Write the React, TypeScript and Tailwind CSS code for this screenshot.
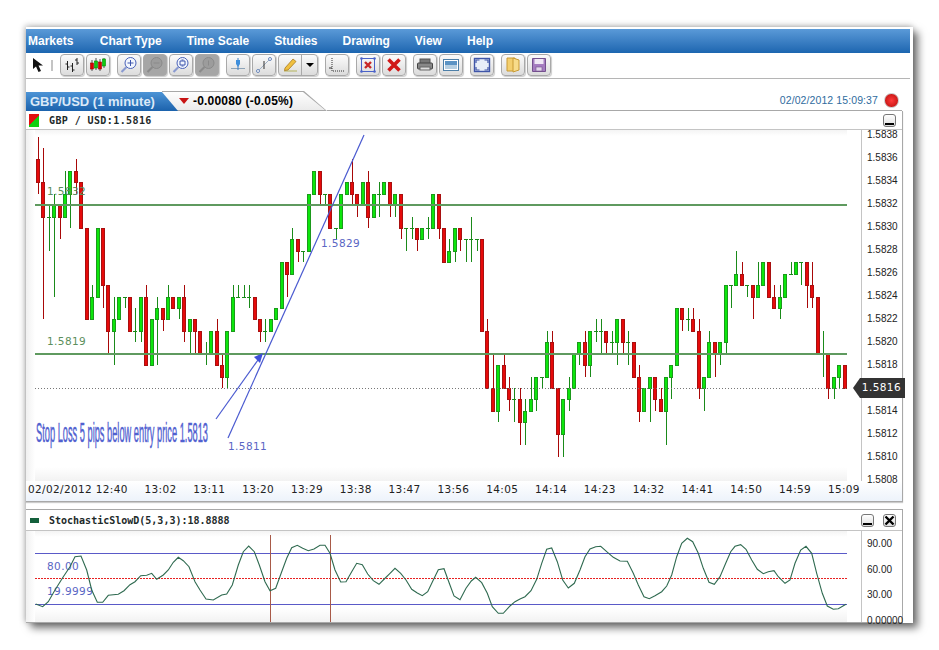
import type { ReactNode } from 'react';

type Candle = { c: 'r' | 'g' | 'd'; top: number; bot: number; hi: number; lo: number; tick?: number };

const r = (top: number, bot: number, hi = top, lo = bot): Candle => ({ c: 'r', top, bot, hi, lo });
const g = (top: number, bot: number, hi = top, lo = bot): Candle => ({ c: 'g', top, bot, hi, lo });
const d = (hi: number, lo: number, tick = hi): Candle => ({ c: 'd', top: tick, bot: tick, hi, lo, tick });

// pips above 1.5800, read off the chart
const candles: Candle[] = [
  r(36, 34, 38, 33), r(34, 31, 37, 22), d(32, 28, 31), g(32, 31, 33, 24), r(32, 31, 32, 29), g(33, 31, 35, 31),
  g(35, 33, 35, 30), r(35, 34, 36, 33), r(34, 30), r(30, 22), g(24, 22, 25, 22), g(30, 24), r(30, 25, 30, 23),
  r(25, 21, 25, 19), g(22, 21, 24, 18), g(24, 22), d(24, 23), r(24, 21), d(23, 20, 21), g(24, 21, 24, 20),
  r(24, 18, 25, 18), g(22, 18), g(23, 22, 24, 18), r(23, 22, 23, 21), g(24, 22, 25, 22), r(24, 23), g(24, 23, 24, 22),
  r(24, 21, 25, 20), g(22, 21, 22, 19), r(22, 21, 22, 19), r(21, 19), d(20, 18, 19), g(21, 19), r(21, 18, 22, 18),
  r(18, 17, 19, 16), g(21, 17, 21, 16), g(24, 21, 25, 21), d(25, 24, 24), d(25, 24, 24), d(25, 23, 24), r(24, 22),
  r(22, 21, 22, 20), d(22, 20, 21), g(22, 21), g(23, 22), g(27, 23), r(27, 26, 27, 24), g(29, 26, 30, 26),
  r(29, 28, 29, 27), d(28, 27, 28), g(33, 28), g(35, 33), r(35, 33, 35, 32), d(33, 32, 33), r(33, 30), d(30, 29, 30),
  g(33, 30), g(34, 33), r(34, 33, 36, 32), r(33, 32, 33, 31), g(34, 32), r(34, 31, 35, 30), g(33, 31), d(34, 31, 33),
  g(34, 33), r(34, 32, 34, 31), g(33, 32, 33, 31), r(33, 30, 33, 29), d(30, 28, 30), d(31, 29, 30), r(30, 29, 30, 28),
  g(30, 29), d(31, 29, 30), g(33, 30), r(33, 30, 33, 29), r(30, 27), g(28, 27, 29, 27), g(30, 28, 30, 27),
  r(30, 29, 30, 28), d(29, 27, 29), d(31, 27, 29), d(29, 28, 29), r(29, 21), r(21, 16, 22, 16), r(16, 14, 19, 14),
  g(18, 14, 18, 13), r(18, 16, 19, 16), r(16, 15, 17, 14), d(16, 13, 15), r(15, 13, 16, 11), g(14, 13, 15, 11),
  g(15, 14, 17, 14), g(17, 15, 17, 14), d(17, 16, 17), g(20, 17, 21, 17), r(20, 16, 21, 16), r(16, 12, 16, 10),
  g(15, 12, 15, 10), g(16, 15, 17, 14), g(19, 16), g(20, 19, 20, 18), r(20, 18, 21, 17), g(21, 18, 21, 17),
  d(22, 20, 21), d(22, 19, 21), r(21, 20, 21, 19), d(21, 19, 20), g(22, 20, 22, 18), r(22, 20, 22, 19), d(21, 18, 20),
  r(20, 17), r(17, 14, 18, 13), g(16, 14), g(17, 16, 17, 13), r(17, 15, 17, 14), r(15, 14, 16, 14), g(17, 14, 17, 11),
  g(18, 17, 18, 15), g(23, 18), r(23, 22, 23, 21), d(23, 21, 22), r(22, 21, 23, 21), r(21, 16, 22, 15), g(17, 16, 17, 14),
  g(20, 17, 21, 17), r(20, 19, 20, 17), g(20, 19, 20, 18), g(25, 20, 25, 19), d(25, 23, 25), g(26, 25, 28, 25),
  r(26, 25, 27, 25), d(25, 24, 25), r(25, 24, 25, 22), g(25, 24, 27, 24), g(27, 25), r(27, 24), r(24, 23, 25, 23),
  g(24, 23, 25, 22), g(26, 24), d(27, 26, 26), g(27, 26), d(27, 25, 27), r(27, 25, 27, 23), r(25, 24, 27, 23),
  r(24, 19), d(21, 17, 19), r(19, 16, 19, 15), g(17, 16, 17, 15), g(18, 17, 18, 16), r(18, 16),
];

const py = (p: number) => Math.round(388 - (p - 16) * 11.43);

// stochastic line, page coordinates
const stoch = [
  ...[[47,402],[68,410],[85,395],[105,360],[130,320],[150,290],[165,260],[183,258],[200,300],[215,360],[232,397],[248,397],[265,376],[295,373],[312,362],[330,344],[345,335],[362,317],[380,316],[395,310],[410,328],[430,315],[445,300],[460,277],[475,262],[490,272],[507,290],[525,335],[540,360],[558,387],[580,390],[605,375],[620,372],[637,345],[655,285],[670,245],[686,228],[703,245],[718,285],[735,335],[750,362],[767,355],[785,305],[800,265],[815,233],[832,226],[848,235],[865,242],[882,237],[900,226],[915,226],[930,250]].map(([x, y]) => [20 + x / 3, 470 + y / 3]),
  ...[[15,210],[32,246],[48,245],[65,215],[80,190],[97,194],[113,222],[130,242],[147,253],[163,237],[180,220],[195,205],[212,220],[228,240],[245,268],[262,279],[277,287],[293,275],[310,240],[325,209],[342,206],[358,250],[372,288],[390,299],[408,265],[424,243],[437,232],[455,248],[472,280],[487,320],[505,340],[520,340],[540,318],[555,305],[570,297],[585,290],[603,272],[620,238],[635,190],[650,148],[665,144],[682,185],[698,240],[715,264],[733,250],[750,210],[765,170],[780,147],[797,140],[812,139],[830,155],[850,172]].map(([x, y]) => [330 + x / 3, 500 + y / 3]),
  ...[[0,273],[22,274],[40,310],[55,345],[72,380],[88,386],[105,377],[125,365],[140,348],[155,315],[170,260],[185,220],[202,205],[218,215],[235,250],[250,295],[267,337],[283,343],[300,320],[317,280],[332,245],[345,229],[362,224],[378,238],[395,270],[412,298],[430,311],[445,305],[462,302],[475,320],[495,340],[510,330],[525,280],[542,240],[558,229],[575,250],[590,310],[607,370],[622,408],[640,418],[655,416],[678,403]].map(([x, y]) => [620 + x / 3, 470 + y / 3]),
];

const times = ['02/02/2012 12:40', '13:02', '13:11', '13:20', '13:29', '13:38', '13:47', '13:56', '14:05', '14:14', '14:23', '14:32', '14:41', '14:50', '14:59', '15:09'];
// the 1.5816 slot sits under the price tag
const prices = ['1.5838', '1.5836', '1.5834', '1.5832', '1.5830', '1.5828', '1.5826', '1.5824', '1.5822', '1.5820', '1.5818', '', '1.5814', '1.5812', '1.5810', '1.5808'];

function Btn({ children, off, className = 'w-[24px]' }: { children?: ReactNode; off?: boolean; className?: string }) {
  return (
    <div
      className={`flex h-[22px] items-center justify-center rounded-[4px] border border-[#a9a9a9] shadow-[1px_1px_1px_rgba(0,0,0,0.2)] ${
        off ? 'bg-[#a6a6a6]' : 'bg-linear-to-b from-[#fbfbfb] to-[#dcdcdc]'
      } ${className}`}
    >
      {children}
    </div>
  );
}

function Ico({ children }: { children: ReactNode }) {
  return (
    <svg width="18" height="18" viewBox="0 0 18 18" fill="none">
      {children}
    </svg>
  );
}

function Lens({ off, mark }: { off?: boolean; mark: ReactNode }) {
  const c = off ? '#8a8a8a' : '#4a62b8';
  return (
    <Ico>
      <circle cx="10.5" cy="7" r="5.5" fill={off ? '#9c9c9c' : '#f2f6fd'} stroke={c} />
      <path d="M6.5 11 L1.5 16" stroke={off ? '#8a8a8a' : '#8a9ad0'} strokeWidth="2.2" />
      <g stroke={off ? '#8a8a8a' : '#3e56ae'}>{mark}</g>
    </Ico>
  );
}

function Toolbar() {
  return (
    <div className="mr-[3px] flex h-[26px] items-center border-b border-[#b5b5b5] bg-white pb-[1px]">
      <svg className="ml-[6px]" width="12" height="15" viewBox="0 0 12 15">
        <path d="M1 0 L1 11 L4 8.5 L6.5 14 L9 13 L6.5 7.5 L11 7.5 Z" fill="#111" />
      </svg>
      <div className="ml-[7px] h-[11px] w-[2px] border-x border-[#c4c4c4]" />
      <div className="ml-[7px] flex gap-[7px]">
        <div className="flex gap-[2px]">
          <Btn>
            <Ico>
              <path d="M4.5 5 V14 M2.5 8 H4.5 M4.5 11 H6.5 M9.5 7 V16 M7.5 10 H9.5 M9.5 14 H11.5 M14 2 V9 M12 4 H14 M14 7 H16" stroke="#222" />
            </Ico>
          </Btn>
          <Btn>
            <Ico>
              <path d="M3 4 V15 M7 2 V14 M11 3 V15 M15 2 V12" stroke="#555" />
              <rect x="1.5" y="7" width="3" height="6" fill="#d00" stroke="#900" strokeWidth=".6" />
              <rect x="5.5" y="5" width="3" height="7" fill="#1c1" stroke="#080" strokeWidth=".6" />
              <rect x="9.5" y="6" width="3" height="7" fill="#d00" stroke="#900" strokeWidth=".6" />
              <rect x="13.5" y="3" width="3" height="7" fill="#1c1" stroke="#080" strokeWidth=".6" />
            </Ico>
          </Btn>
        </div>
        <div className="flex gap-[2px]">
          <Btn>
            <Lens mark={<path d="M7.5 7 H13.5 M10.5 4 V10" />} />
          </Btn>
          <Btn off>
            <Lens off mark={<path d="M7.5 7 H13.5" />} />
          </Btn>
          <Btn>
            <Lens mark={<path d="M8 5 V9 H13 V5 Z M9.5 4 H11.5 M9.5 10 H11.5" />} />
          </Btn>
          <Btn off>
            <Lens off mark={<path d="M10.5 4.5 V9.5" />} />
          </Btn>
        </div>
        <div className="flex gap-[2px]">
          <Btn>
            <Ico>
              <path d="M2 12.5 H16" stroke="#8ea4b8" />
              <path d="M9 2 V14" stroke="#3f7fc4" />
              <path d="M7 4 H11 V8 L9 11 L7 8 Z" fill="#3f8fdc" />
            </Ico>
          </Btn>
          <Btn>
            <Ico>
              <path d="M3 15 L15 3" stroke="#9fb0c4" />
              <path d="M9 5 V13" stroke="#333" />
              <circle cx="3" cy="15" r="1.5" fill="#fff" stroke="#6a86b8" />
              <circle cx="15" cy="3" r="1.5" fill="#fff" stroke="#6a86b8" />
            </Ico>
          </Btn>
          <div className="flex h-[22px] w-[40px] rounded-[4px] border border-[#a9a9a9] bg-linear-to-b from-[#fbfbfb] to-[#dcdcdc] shadow-[1px_1px_1px_rgba(0,0,0,0.2)]">
            <div className="flex w-[23px] items-center justify-center border-r border-[#a9a9a9]">
              <Ico>
                <path d="M3 15 H16" stroke="#b3b35a" />
                <path d="M4 12 L12 3 L15 5.5 L7 14 L3.5 14.5 Z" fill="#f0c040" stroke="#a87a20" strokeWidth=".8" />
              </Ico>
            </div>
            <div className="flex flex-1 items-center justify-center">
              <div className="h-0 w-0 border-x-[4px] border-t-[4px] border-x-transparent border-t-black" />
            </div>
          </div>
        </div>
        <Btn>
          <Ico>
            <path d="M4 2 V15 H16" stroke="#333" strokeDasharray="1 1" />
            <path d="M1 12 H4" stroke="#333" />
          </Ico>
        </Btn>
        <div className="flex gap-[2px]">
          <Btn>
            <Ico>
              <rect x="2.5" y="2.5" width="13" height="13" stroke="#4a62c8" />
              <circle cx="2.5" cy="2.5" r="1.3" fill="#4a62c8" />
              <circle cx="15.5" cy="2.5" r="1.3" fill="#4a62c8" />
              <circle cx="2.5" cy="15.5" r="1.3" fill="#4a62c8" />
              <circle cx="15.5" cy="15.5" r="1.3" fill="#4a62c8" />
              <path d="M6 6 L12 12 M12 6 L6 12" stroke="#c82828" strokeWidth="2.4" />
            </Ico>
          </Btn>
          <Btn>
            <Ico>
              <path d="M3.5 3.5 L14.5 14.5 M14.5 3.5 L3.5 14.5" stroke="#d01818" strokeWidth="3.6" />
            </Ico>
          </Btn>
        </div>
        <div className="flex gap-[2px]">
          <Btn>
            <Ico>
              <rect x="4" y="3" width="10" height="5" fill="#777" stroke="#555" />
              <rect x="1.5" y="7" width="15" height="6" rx="1" fill="#888" stroke="#444" />
              <rect x="4" y="11" width="10" height="3" fill="#ddd" stroke="#666" />
            </Ico>
          </Btn>
          <Btn>
            <Ico>
              <rect x="1.5" y="3.5" width="15" height="11" fill="#fff" stroke="#4d7fa8" />
              <rect x="3" y="5" width="12" height="4" fill="#5b93c4" />
              <rect x="3" y="9" width="12" height="4" fill="#b6cfe2" />
            </Ico>
          </Btn>
        </div>
        <Btn>
          <Ico>
            <rect x="1.5" y="2.5" width="15" height="13" fill="#e8eef8" stroke="#3f55a8" strokeWidth="1.4" />
            <path d="M3 7 V4 H6.5 M15 7 V4 H11.5 M3 11 V14 H6.5 M15 11 V14 H11.5" stroke="#3f55a8" strokeWidth="1.2" />
          </Ico>
        </Btn>
        <div className="flex gap-[2px]">
          <Btn>
            <Ico>
              <path d="M3 2 H11 V15 H3 Z" fill="#f4cf6e" stroke="#c89a34" />
              <path d="M9 2 L15 4 V14 L9 16 Z" fill="#f8dc8a" stroke="#c89a34" />
            </Ico>
          </Btn>
          <Btn>
            <Ico>
              <path d="M2.5 2.5 H15.5 V15.5 H2.5 Z" fill="#a57cc0" stroke="#74508e" />
              <rect x="4.5" y="3" width="9" height="5" fill="#f0e8f5" />
              <rect x="6" y="11" width="6" height="4" fill="#e2d6ea" stroke="#74508e" strokeWidth=".6" />
            </Ico>
          </Btn>
        </div>
      </div>
    </div>
  );
}

function TabRow() {
  return (
    <div className="relative mt-[12px] flex h-[20px] items-stretch">
      <div className="relative z-10 w-[152px] bg-linear-to-b from-[#4f97d8] to-[#1b62ac] pl-[4px] pt-[1px] font-['Liberation_Sans',sans-serif] text-[13px] font-bold whitespace-nowrap text-[#dbe9f8] [clip-path:polygon(0_1px,136px_1px,152px_100%,0_100%)]">
        GBP/USD (1 minute)
      </div>
      <div className="relative -ml-[16px] w-[165px] bg-[#a8a8a8] [clip-path:polygon(0_0,142px_0,165px_100%,0_100%)]">
        <div className="flex h-[19px] w-[164px] items-center bg-linear-to-b from-[#ffffff] to-[#ebebeb] pl-[17px] font-['Liberation_Sans',sans-serif] text-[12px] whitespace-nowrap text-black [clip-path:polygon(0_1px,141px_1px,163px_100%,0_100%)]">
          <div className="mr-[4px] h-0 w-0 border-x-[5px] border-t-[6px] border-x-transparent border-t-[#c81414]" />
          <span className="font-bold tracking-[.2px]">-0.00080 (-0.05%)</span>
        </div>
      </div>
      <div className="flex flex-1 flex-col">
        <div className="flex h-[19px] items-center justify-end pr-[14px]">
          <span className="mr-[6px] font-['Liberation_Sans',sans-serif] text-[10.5px] tracking-[.1px] whitespace-nowrap text-[#2f6c9e]">02/02/2012 15:09:37</span>
          <div className="h-[15px] w-[15px] rounded-full border border-[#c8c8c8] bg-radial from-[#ff3a3a] to-[#b80000]" />
        </div>
        <div className="mr-[11px] h-px bg-[#a8a8a8]" />
      </div>
    </div>
  );
}

function MiniBtn({ close }: { close?: boolean }) {
  return (
    <div className="flex h-[13px] w-[13px] items-end justify-center rounded-[3px] border border-[#777] bg-linear-to-b from-white to-[#dedede]">
      {close ? (
        <svg width="11" height="11" viewBox="0 0 11 11">
          <path d="M1.5 1.5 L9.5 9.5 M9.5 1.5 L1.5 9.5" stroke="#000" strokeWidth="2.4" />
        </svg>
      ) : (
        <div className="mb-[1px] h-[2px] w-[9px] bg-black" />
      )}
    </div>
  );
}

function PlotShade({ id, x, y, w, h }: { id: string; x: number; y: number; w: number; h: number }) {
  return (
    <>
      <defs>
        <linearGradient id={`${id}t`} x1="0" y1="0" x2="0" y2="1">
          <stop offset="0" stopColor="#f4f4f4" />
          <stop offset="1" stopColor="#ffffff" />
        </linearGradient>
        <linearGradient id={`${id}b`} x1="0" y1="0" x2="0" y2="1">
          <stop offset="0" stopColor="#ffffff" />
          <stop offset="1" stopColor="#f2f2f2" />
        </linearGradient>
        <linearGradient id={`${id}l`} x1="0" y1="0" x2="1" y2="0">
          <stop offset="0" stopColor="#f0f0f0" />
          <stop offset="1" stopColor="#ffffff" />
        </linearGradient>
      </defs>
      <rect x={x} y={y} width="9" height={h} fill={`url(#${id}l)`} />
      <rect x={x + 9} y={y} width={w - 23} height="6" fill={`url(#${id}t)`} />
      <rect x={x + 9} y={y + h - 14} width={w - 23} height="14" fill={`url(#${id}b)`} />
    </>
  );
}

function PriceChart() {
  return (
    <svg width="835" height="351" viewBox="26 130 835 351" className="block font-['DejaVu_Sans',sans-serif]">
      <PlotShade id="pc" x={26} y={130} w={835} h={351} />
      {candles.map((k, i) => {
        const x = Math.round(36 + i * 5.414);
        const up = k.c !== 'r';
        const wick = up ? '#1a8a1a' : '#a80808';
        return (
          <g key={i} shapeRendering="crispEdges">
            <rect x={x + 2} y={py(k.hi)} width="1" height={py(k.lo) - py(k.hi)} fill={wick} />
            {k.c === 'd' ? (
              <rect x={x} y={py(k.tick ?? k.hi)} width="4" height="1" fill={wick} />
            ) : (
              <rect
                x={x + 0.5}
                y={py(k.top) + 0.5}
                width="3"
                height={py(k.bot) - py(k.top)}
                fill={up ? '#0ce60c' : '#e60a0a'}
                stroke={up ? '#1b9a1b' : '#a81010'}
              />
            )}
          </g>
        );
      })}
      <g shapeRendering="crispEdges">
        <rect x="35" y="204" width="812" height="2" fill="#5f9a5f" />
        <rect x="35" y="353" width="812" height="2" fill="#5f9a5f" />
        <line x1="35" y1="388.5" x2="847" y2="388.5" stroke="#777" strokeDasharray="1 2" />
      </g>
      <text x="47" y="195" fontSize="10.5" fill="#5c8f5c" letterSpacing=".4">1.5832</text>
      <text x="47" y="345" fontSize="10.5" fill="#5c8f5c" letterSpacing=".4">1.5819</text>
      <text x="321" y="247" fontSize="10.5" fill="#5a66c4" letterSpacing=".4">1.5829</text>
      <text x="228" y="450" fontSize="10.5" fill="#5a66c4" letterSpacing=".4">1.5811</text>
      <line x1="228" y1="438" x2="364" y2="135" stroke="#4a5ad0" strokeWidth="1.2" />
      <line x1="216" y1="419" x2="258" y2="360" stroke="#4a5ad0" strokeWidth="1.2" />
      <path d="M263 353 L254 357 L260 363 Z" fill="#3f50d8" />
      <text
        transform="translate(36 442) scale(.331 1)"
        fontSize="28"
        fill="#5060d0"
        stroke="#5060d0"
        strokeWidth=".5"
        className="font-['Liberation_Sans',sans-serif]"
      >
        Stop Loss 5 pips below entry price 1.5813
      </text>
    </svg>
  );
}

function StochChart() {
  return (
    <svg width="835" height="91" viewBox="26 531 835 91" className="block font-['DejaVu_Sans',sans-serif]">
      <PlotShade id="sc" x={26} y={531} w={835} h={91} />
      <g shapeRendering="crispEdges">
        <line x1="35" y1="553.5" x2="847" y2="553.5" stroke="#5a5ac8" />
        <line x1="35" y1="604.5" x2="847" y2="604.5" stroke="#5a5ac8" />
        <line x1="35" y1="578.5" x2="847" y2="578.5" stroke="#e82020" strokeDasharray="2 1" />
        <line x1="270.5" y1="535" x2="270.5" y2="622" stroke="#a85a48" />
        <line x1="330.5" y1="535" x2="330.5" y2="622" stroke="#a85a48" />
      </g>
      <text x="47" y="570" fontSize="10.5" fill="#5a66c4" letterSpacing=".4">80.00</text>
      <text x="47" y="595" fontSize="10.5" fill="#5a66c4" letterSpacing=".4">19.9999</text>
      <polyline points={stoch.map(([x, y]) => `${x.toFixed(1)},${y.toFixed(1)}`).join(' ')} fill="none" stroke="#2f6a50" strokeWidth="1.1" />
    </svg>
  );
}

export default function App() {
  return (
    <div className="h-[650px] w-[939px] overflow-hidden bg-white pl-[26px] pt-[27px]">
      <div className="h-[596px] w-[887px] bg-white pt-[2px] shadow-[5px_5px_8px_rgba(0,0,0,0.55),-1px_-1px_6px_rgba(0,0,0,0.3)]">
        <div className="mr-[3px] flex h-[24px] items-center gap-[25px] bg-linear-to-b from-[#5a9ad8] to-[#1c66b0] pl-[2px] font-['Liberation_Sans',sans-serif] text-[12px] font-bold text-white">
          {['Markets', 'Chart Type', 'Time Scale', 'Studies', 'Drawing', 'View', 'Help'].map(m => (
            <span key={m} className="first:mr-[1.5px]">{m}</span>
          ))}
        </div>
        <Toolbar />
        <TabRow />

        <div className="mr-[10px] border-r border-b border-[#a8a8a8] shadow-[0_1px_1px_rgba(0,0,0,0.2)]">
          <div className="flex h-[19px] items-center border-b border-[#c4c4c4] pr-[6px]">
            <div className="ml-[3px] h-[13px] w-[10px] bg-[linear-gradient(135deg,#e01010_50%,#10d010_50%)]" />
            <span className="ml-[10px] flex-1 font-['DejaVu_Sans_Mono',monospace] text-[10px] font-bold tracking-[.4px] whitespace-pre text-[#1d2a2a]">GBP / USD:1.5816</span>
            <MiniBtn />
          </div>
          <div className="relative flex h-[351px]">
            <div className="border-r border-[#c4c4c4]">
              <PriceChart />
            </div>
            <div className="-mt-[1px] flex h-[357px] w-[41px] flex-col justify-between pl-[5px] font-['Liberation_Sans',sans-serif] text-[10px] leading-[12px] text-[#222]">
              {prices.map((p, i) => (
                <span key={i} className="h-[12px]">{p}</span>
              ))}
            </div>
            <div className="absolute top-[248px] left-[827px] flex h-[20px] w-[52px] items-center justify-end bg-[#333] pr-[4px] font-['DejaVu_Sans',sans-serif] text-[10.5px] tracking-[.4px] text-white [clip-path:polygon(0_50%,7px_0,100%_0,100%_100%,7px_100%)]">
              1.5816
            </div>
          </div>
          <div className="flex h-[20px] justify-between bg-linear-to-b from-white to-[#edf3fb] pl-[2px] pr-[42px] pt-[1px] font-['DejaVu_Sans',sans-serif] text-[10.5px] leading-[14px] tracking-[.35px] text-[#222]">
            {times.map(t => (
              <span key={t} className="whitespace-nowrap">{t}</span>
            ))}
          </div>
        </div>

        <div className="mt-[7px] mr-[10px] border-t border-r border-b border-[#a8a8a8]">
          <div className="flex h-[21px] items-center gap-[14px] border-b border-[#c4c4c4] pr-[6px]">
            <div className="ml-[4px] flex items-center">
              <div className="h-[5px] w-[9px] bg-[#14603c]" />
              <span className="ml-[10px] font-['DejaVu_Sans_Mono',monospace] text-[10px] font-bold whitespace-pre text-[#1d2a2a]">StochasticSlowD(5,3,3):18.8888</span>
            </div>
            <div className="ml-auto flex gap-[9px]">
              <MiniBtn />
              <MiniBtn close />
            </div>
          </div>
          <div className="flex h-[91px]">
            <div className="border-r border-[#c4c4c4]">
              <StochChart />
            </div>
            <div className="flex h-[96px] flex-1 flex-col justify-between pl-[5px] pt-[7px] font-['Liberation_Sans',sans-serif] text-[10px] leading-[12px] text-[#222]">
              <span>90.00</span>
              <span>60.00</span>
              <span>30.00</span>
              <span>0.00000</span>
            </div>
          </div>
        </div>
      </div>
    </div>
  );
}
